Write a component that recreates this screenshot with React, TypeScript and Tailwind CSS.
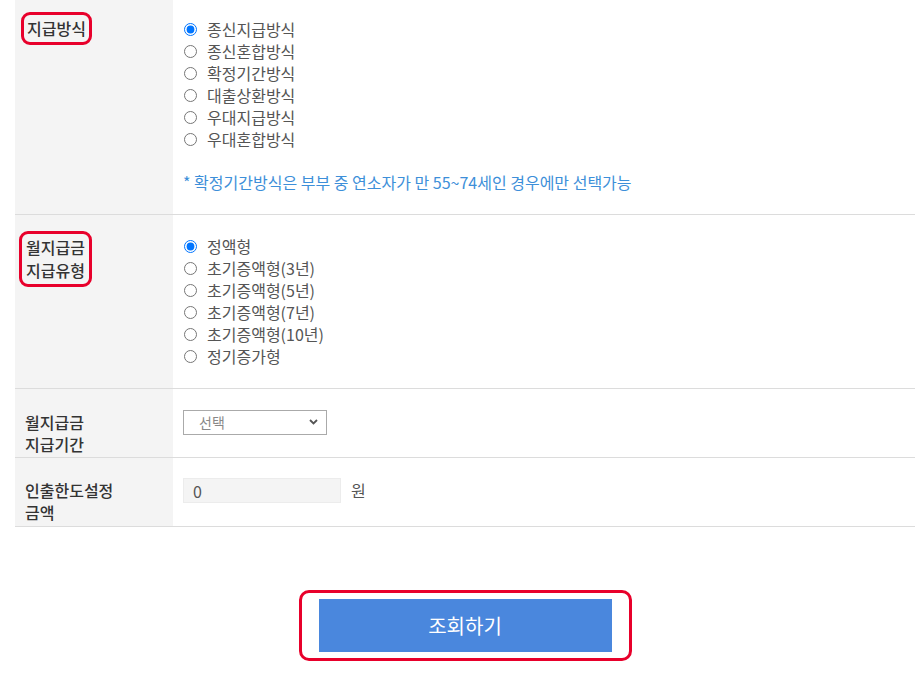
import React from 'react';

const font = { fontFamily: '"Noto Sans CJK KR", "Noto Sans", sans-serif' };

const payTypes = ['종신지급방식', '종신혼합방식', '확정기간방식', '대출상환방식', '우대지급방식', '우대혼합방식'];
const monthlyTypes = ['정액형', '초기증액형(3년)', '초기증액형(5년)', '초기증액형(7년)', '초기증액형(10년)', '정기증가형'];

function RadioList({ name, items }: { name: string; items: string[] }) {
  return (
    <div className="flex flex-col">
      {items.map((label, i) => (
        <label key={label} className="flex items-center h-[22px] leading-[22px] text-[16px] text-[#555]">
          <input
            type="radio"
            name={name}
            defaultChecked={i === 0}
            className="m-0 ml-[1px] w-[13px] h-[13px]"
          />
          <span className="ml-[10px]">{label}</span>
        </label>
      ))}
    </div>
  );
}

export default function App() {
  return (
    <div className="bg-white min-h-screen w-[922px]" style={font}>
      <div className="ml-[15px] w-[900px]">
        {/* 지급방식 */}
        <div className="flex h-[215px] border-b border-[#dcdcdc]">
          <div className="w-[158px] bg-[#f4f4f4] pl-[10px] pt-[12px]">
            <span className="inline-block -ml-[4px] border-[3px] border-[#e8002b] rounded-[9px] px-[3px] py-[2px] leading-[23px] text-[16px] font-medium text-[#333]">
              지급방식
            </span>
          </div>
          <div className="flex-1 pl-[10px] pt-[18px]">
            <RadioList name="payType" items={payTypes} />
            <p className="mt-[21px] leading-[22px] text-[16px] text-[#3d8fd9]">
              * 확정기간방식은 부부 중 연소자가 만 55~74세인 경우에만 선택가능
            </p>
          </div>
        </div>

        {/* 월지급금 지급유형 */}
        <div className="flex h-[174px] border-b border-[#dcdcdc]">
          <div className="w-[158px] bg-[#f4f4f4] pl-[10px] pt-[16px]">
            <span className="inline-block -ml-[6px] border-[3px] border-[#e8002b] rounded-[9px] px-[4px] py-[2px] leading-[23px] text-[16px] font-medium text-[#333]">
              월지급금
              <br />
              지급유형
            </span>
          </div>
          <div className="flex-1 pl-[10px] pt-[20px]">
            <RadioList name="monthlyType" items={monthlyTypes} />
          </div>
        </div>

        {/* 월지급금 지급기간 */}
        <div className="flex h-[69px] border-b border-[#dcdcdc]">
          <div className="w-[158px] bg-[#f4f4f4] pl-[10px] pt-[22px] leading-[22px] text-[16px] font-medium text-[#333]">
            월지급금
            <br />
            지급기간
          </div>
          <div className="flex-1 pl-[10px] pt-[20px]">
            <div className="relative w-[144px] h-[25px]">
              <select className="appearance-none w-full h-full border border-[#aaa] bg-white pl-[15px] text-[14px] text-[#888] outline-none">
                <option>선택</option>
              </select>
              <svg className="absolute right-[9px] top-[10px] pointer-events-none" width="9" height="6" viewBox="0 0 9 6">
                <path d="M1 1l3.5 3.5L8 1" fill="none" stroke="#555" strokeWidth="1.8" />
              </svg>
            </div>
          </div>
        </div>

        {/* 인출한도설정 금액 */}
        <div className="flex h-[69px] border-b border-[#dcdcdc]">
          <div className="w-[158px] bg-[#f4f4f4] pl-[10px] pt-[21px] leading-[22px] text-[16px] font-medium text-[#333]">
            인출한도설정
            <br />
            금액
          </div>
          <div className="flex-1 pl-[10px] pt-[20px] flex items-start">
            <input
              type="text"
              defaultValue="0"
              className="w-[158px] h-[25px] bg-[#f4f4f4] border border-[#ececec] pl-[9px] text-[16px] text-[#555] outline-none"
            />
            <span className="ml-[10px] leading-[25px] text-[16px] text-[#555]">원</span>
          </div>
        </div>

        {/* 조회하기 */}
        <div className="flex justify-center mt-[63px]">
          <div className="border-[3px] border-[#e8002b] rounded-[10px] px-[17px] py-[6px]">
            <button className="w-[293px] h-[53px] bg-[#4a87dd] text-white text-[20px]">조회하기</button>
          </div>
        </div>
      </div>
    </div>
  );
}
